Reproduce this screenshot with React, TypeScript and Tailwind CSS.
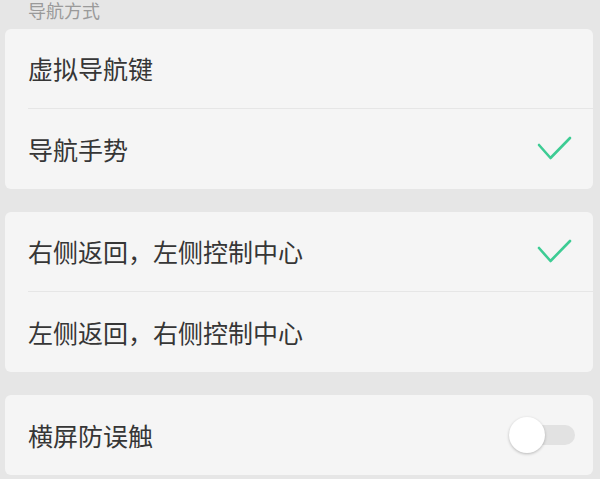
import { useState } from "react";

const font = { fontFamily: '"Noto Sans CJK SC", "Noto Sans", sans-serif' };

const Check = () => (
  <svg width="36" height="26" viewBox="0 0 36 26" fill="none">
    <path
      d="M2 9 L13.5 22 L33 2"
      stroke="#3dcc94"
      strokeWidth="2.6"
      strokeLinecap="round"
      strokeLinejoin="round"
    />
  </svg>
);

const Row = ({
  label,
  checked,
  divider,
  right,
}: {
  label: string;
  checked?: boolean;
  divider?: boolean;
  right?: React.ReactNode;
}) => (
  <div className="pl-[23px]">
    <div
      className={`flex h-[80px] items-center justify-between pr-[20px] ${
        divider ? "border-b border-[#e6e6e6]" : ""
      }`}
    >
      <span className="text-[25px] leading-none text-[#363636]">{label}</span>
      {checked && <Check />}
      {right}
    </div>
  </div>
);

const Toggle = () => {
  const [on, setOn] = useState(false);
  return (
    <button
      onClick={() => setOn(!on)}
      className="relative mr-[-2px] flex h-[38px] w-[70px] items-center"
    >
      <span
        className={`absolute right-0 h-[20px] w-[64px] rounded-full ${
          on ? "bg-[#3dcc94]" : "bg-[#e2e2e2]"
        }`}
      />
      <span
        className={`absolute top-[1px] h-[36px] w-[36px] rounded-full bg-white shadow-[0_1px_3px_rgba(0,0,0,0.25)] ${
          on ? "left-[34px]" : "left-[4px]"
        }`}
      />
    </button>
  );
};

export default function App() {
  return (
    <div
      className="h-[479px] w-[600px] overflow-hidden bg-[#e6e6e6] pl-[5px] pr-[7px]"
      style={font}
    >
      <div className="flex h-[29px] items-start pl-[23px]">
        <span className="mt-[1px] text-[18px] leading-[18px] text-[#9a9a9a]">导航方式</span>
      </div>
      <div className="flex flex-col gap-[23px]">
        <div className="rounded-[6px] bg-[#f5f5f5]">
          <Row label="虚拟导航键" divider />
          <Row label="导航手势" checked />
        </div>
        <div className="rounded-[6px] bg-[#f5f5f5]">
          <Row label="右侧返回，左侧控制中心" checked divider />
          <Row label="左侧返回，右侧控制中心" />
        </div>
        <div className="rounded-[6px] bg-[#f5f5f5]">
          <Row label="横屏防误触" right={<Toggle />} />
        </div>
      </div>
    </div>
  );
}
